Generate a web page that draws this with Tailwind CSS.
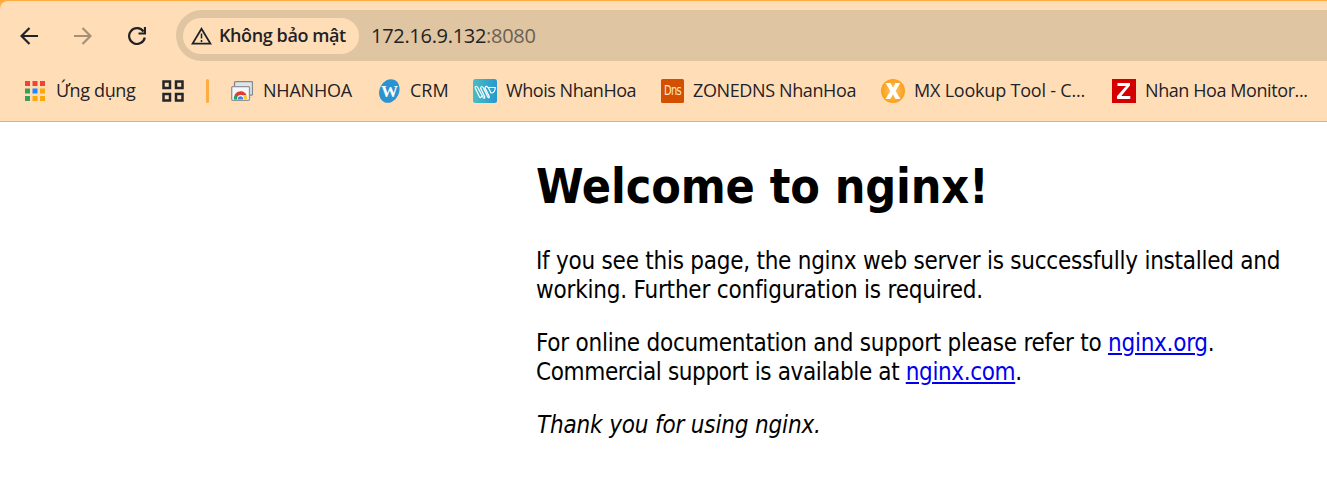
<!DOCTYPE html>
<html lang="vi">
<head>
<meta charset="utf-8">
<title>Welcome to nginx!</title>
<script src="https://cdn.jsdelivr.net/npm/@tailwindcss/browser@4"></script>
</head>
<body class="h-[493px] w-[1327px] overflow-hidden bg-white">
<header class="h-[122px] bg-[#ffac42] pt-px">
  <div class="h-[121px] rounded-tl-[8px] border-b border-[#d6b286] bg-[#ffdeb7] font-['Open_Sans',sans-serif] text-[#1f2226]">
    <div class="flex h-[69px] items-center pl-[17px]">
      <svg class="ml-[3px] h-[18px] w-[18px]" viewBox="0 0 18 18" fill="none" stroke="#1f2226" stroke-width="2.2"><path d="M18 9H2M9.5 1 1.5 9l8 8"/></svg>
      <svg class="ml-[36px] h-[18px] w-[18px]" viewBox="0 0 18 18" fill="none" stroke="#a58f78" stroke-width="2.2"><path d="M0 9h16M8.500 1l8 8-8 8"/></svg>
      <svg class="ml-[36px] h-[18px] w-[18px]" viewBox="0 0 18 18" fill="none" stroke="#1f2226" stroke-width="2.2"><path d="M16.800 10.500A7.900 7.900 0 1 1 15.500 4.500M17 0v6.500h-6.500"/></svg>
      <div class="ml-[30px] flex h-[51px] flex-1 items-center rounded-l-full bg-[#dfc5a1] pl-[7px]">
        <div class="flex h-[36px] w-[176px] items-center rounded-full bg-[#ffdeb7] pl-[8px]">
          <svg class="h-[18px] w-[21px] shrink-0" viewBox="0 0 21 18" fill="none" stroke="#1f2226" stroke-width="1.8"><path d="M10.500 1.800 1.600 16.600h17.800Z"/><path d="M10.500 6.500v5M10.500 13v2" stroke-width="1.500"/></svg>
          <span class="ml-[7px] whitespace-nowrap text-[18px] font-semibold tracking-[-0.4px]">Không bảo mật</span>
        </div>
        <span class="ml-[12px] whitespace-nowrap text-[20px] tracking-[-0.3px]">172.16.9.132<span class="text-[#6b6054]">:8080</span></span>
      </div>
    </div>
    <nav class="flex h-[41px] items-center pl-[25px] text-[18px] whitespace-nowrap">
      <div class="flex w-[137px] items-center gap-[11px]">
        <svg class="h-5 w-5" viewBox="0 0 20 20"><path fill="#f44336" d="M0 0h5v5H0zM7.500 0h5v5h-5zM15 0h5v5h-5z"/><path fill="#34a058" d="M0 7.500h5v5H0zM0 15h5v5H0z"/><path fill="#1e88ff" d="M7.500 7.500h5v5h-5z"/><path fill="#f9a90a" d="M15 7.500h5v5h-5zM7.500 15h5v5h-5zM15 15h5v5h-5z"/></svg>
        <span class="tracking-[-0.35px]">Ứng dụng</span>
      </div>
      <div class="w-[44px]">
        <svg class="h-[22px] w-[22px]" viewBox="0 0 22 22" fill="none" stroke="#24262a" stroke-width="2.500"><path d="M1.500 1.500h6.500v6.500H1.500zM14 1.500h6.500v6.500H14zM1.500 14h6.500v6.500H1.500zM14 14h6.500v6.500H14z"/></svg>
      </div>
      <div class="w-[25px]"><div class="h-6 w-[3px] rounded-full bg-[#ffac42]"></div></div>
      <div class="flex w-[147px] items-center gap-[10px]">
        <svg class="h-[20px] w-[22px]" viewBox="0 0 22 20"><rect x="3.500" y=".7" width="18" height="13.500" rx="1" fill="#dce5ec" stroke="#858789" stroke-width="1.300"/><rect x=".7" y="5.700" width="17.800" height="13.600" rx="1" fill="#f5f8fa" stroke="#919395" stroke-width="1.300"/><path d="M3 18.600a6.600 6.600 0 0 1 2-6l3 5v1z" fill="#22a35b"/><path d="M4 13.200a6.700 6.700 0 0 1 11.600 1H9.500l-2 3z" fill="#e33b2e"/><path d="M10 14.200h5.600a7 7 0 0 1 .6 4.400h-5z" fill="#fcc934"/><path d="M6.200 18.600a3.500 3.500 0 1 1 6.600 0z" fill="#fff"/><path d="M6.900 18.600a2.700 2.700 0 1 1 5.200 0z" fill="#3b82ec"/></svg>
        <span class="tracking-[-0.2px]">NHANHOA</span>
      </div>
      <div class="flex w-[95px] items-center gap-[9px]">
        <svg class="h-6 w-[23px]" viewBox="0 0 23 24"><ellipse cx="11.300" cy="12" rx="9.800" ry="12.200" transform="rotate(24 11.300 12)" fill="#2d93cf"/><text x="11.500" y="17.500" text-anchor="middle" font-family="Liberation Serif" font-weight="bold" font-size="17" fill="#fff">W</text></svg>
        <span>CRM</span>
      </div>
      <div class="flex w-[188px] items-center gap-[9px]">
        <svg class="h-6 w-6" viewBox="0 0 24 24"><defs><linearGradient id="teal"><stop stop-color="#4bbcc3"/><stop offset="1" stop-color="#2499d0"/></linearGradient></defs><rect width="24" height="24" rx="2.500" fill="url(#teal)"/><path d="M2 8.500Q3 6 4.800 8.500l5.400 10q1.300 1.800 1.600-.5L7.500 9Q8.500 6 10.500 9l4.300 9q1.500 1.800 1.500-.5L12 9q1-3 3-.5h7.300q-.3 5.500-4.300 5.500L15.300 8.500M2 8.500l4.500 9.500q1.500 1.500 2-1" fill="none" stroke="#fff" stroke-width="1.200" stroke-linejoin="round"/></svg>
        <span class="tracking-[-0.45px]">Whois NhanHoa</span>
      </div>
      <div class="flex w-[220px] items-center gap-[9px]">
        <div class="flex h-6 w-[23px] items-center justify-center rounded-[1.5px] bg-[#d35000] font-['DejaVu_Sans_Condensed'] text-[11px] leading-none tracking-[-0.7px] text-[#ffe5cf]"><span class="scale-y-125">Dns</span></div>
        <span class="tracking-[-0.38px]">ZONEDNS NhanHoa</span>
      </div>
      <div class="flex w-[231px] items-center gap-[9px]">
        <svg class="h-6 w-6" viewBox="0 0 24 24"><defs><radialGradient id="amber"><stop stop-color="#ffc766"/><stop offset="1" stop-color="#fa9f1c"/></radialGradient></defs><circle cx="12" cy="12" r="12" fill="url(#amber)"/><path d="M4.500 4h5L12 8.800 14.500 4h4.800L14.600 12l4.900 8h-5L12 15.200 9.300 20H4.500l4.900-8z" fill="#fff"/></svg>
        <span class="tracking-[-0.2px]">MX Lookup Tool - C...</span>
      </div>
      <div class="flex items-center gap-[9px]">
        <svg class="h-6 w-6" viewBox="0 0 24 24"><path fill="#d40000" d="M0 0h24v24H0z"/><path fill="#fff" d="M5.500 4h12.500v2.600L9.300 17h9v3H5v-2.700L14 7H5.500z"/></svg>
        <span class="tracking-[-0.42px]">Nhan Hoa Monitor...</span>
      </div>
    </nav>
  </div>
</header>
<main class="ml-[536px] font-['DejaVu_Sans_Condensed',sans-serif] text-[24px] leading-[29px] whitespace-nowrap text-black">
  <h1 class="mt-[35px] text-[48px] leading-[58px] font-bold tracking-[-0.12px]">Welcome to nginx!</h1>
  <p class="mt-[32px]"><span class="tracking-[-0.25px]">If you see this page, the nginx web server is successfully installed and</span><br><span class="tracking-[-0.2px]">working. Further configuration is required.</span></p>
  <p class="mt-6"><span class="tracking-[-0.25px]">For online documentation and support please refer to <a class="text-[#0000ee] underline">nginx.org</a>.</span><br><span class="tracking-[-0.37px]">Commercial support is available at <a class="text-[#0000ee] underline">nginx.com</a>.</span></p>
  <p class="mt-6 pl-px tracking-[-0.17px] italic">Thank you for using nginx.</p>
</main>
</body>
</html>
